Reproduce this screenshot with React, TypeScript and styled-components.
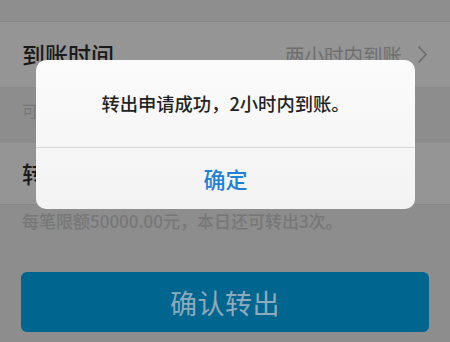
import React from 'react';
import styled, { createGlobalStyle } from 'styled-components';

const GlobalStyle = createGlobalStyle`
  html, body {
    margin: 0;
    padding: 0;
  }
  body {
    font-family: "Noto Sans CJK SC", "Noto Sans", sans-serif;
    background: #8d8d8d;
  }
`;

const Page = styled.div`
  position: relative;
  width: 450px;
  height: 342px;
  overflow: hidden;
  background: #8d8d8d;
  display: flex;
  flex-direction: column;
`;

const TopBand = styled.div`
  height: 21px;
  border-bottom: 1px solid #868686;
  background: #8e8e8e;
`;

const Row = styled.div<{ $height: number }>`
  height: ${p => p.$height}px;
  box-sizing: border-box;
  padding: 0 22px;
  display: flex;
  align-items: center;
  justify-content: space-between;
  background: #959595;
  border-bottom: 1px solid #888;
`;

const Label = styled.span`
  font-size: 23px;
  font-weight: 500;
  color: #1a1a1a;
  line-height: 1;
`;

const Value = styled.span`
  display: flex;
  align-items: center;
  gap: 15px;
  font-size: 19.5px;
  color: #6f6f6f;
`;

const Note = styled.div`
  height: 55px;
  box-sizing: border-box;
  padding: 10px 22px 0;
  font-size: 16px;
  color: #777;
`;

const Hint = styled.div`
  padding: 5px 22px 0;
  font-size: 17px;
  font-weight: 500;
  color: #777;
  line-height: 22px;
`;

const SubmitButton = styled.button`
  margin: 40px 21px 0;
  height: 60px;
  border: none;
  border-radius: 6px;
  background: #00658f;
  color: #8eaabb;
  font-family: inherit;
  font-size: 27px;
  letter-spacing: 0.5px;
`;

const Dialog = styled.div`
  position: absolute;
  top: 60px;
  left: 36px;
  width: 379px;
  height: 149px;
  border-radius: 10px;
  background: linear-gradient(#fbfbfb, #f3f3f3);
  display: flex;
  flex-direction: column;
  overflow: hidden;
`;

const Message = styled.div`
  height: 88px;
  display: flex;
  align-items: center;
  justify-content: center;
  padding-bottom: 2px;
  box-sizing: border-box;
  font-size: 18.3px;
  font-weight: 500;
  color: #222;
  border-bottom: 1px solid #d6d6d6;
`;

const DialogButton = styled.div`
  flex: 1;
  display: flex;
  align-items: center;
  justify-content: center;
  padding-bottom: 2px;
  font-size: 22px;
  font-weight: 500;
  color: #1f80d8;
`;

const Chevron = () => (
  <svg width="11" height="19" viewBox="0 0 11 19">
    <path d="M1.5 1.5 L9 9.5 L1.5 17.5" fill="none" stroke="#6f6f6f" strokeWidth="1.8" />
  </svg>
);

const App: React.FC = () => (
  <>
    <GlobalStyle />
    <Page>
      <TopBand />
      <Row $height={66}>
        <Label>到账时间</Label>
        <Value>
          两小时内到账
          <Chevron />
        </Value>
      </Row>
      <Note>可转出金额 1000.00元</Note>
      <Row $height={62}>
        <Label>转出金额</Label>
      </Row>
      <Hint>每笔限额50000.00元，本日还可转出3次。</Hint>
      <SubmitButton>确认转出</SubmitButton>
      <Dialog>
        <Message>转出申请成功，2小时内到账。</Message>
        <DialogButton>确定</DialogButton>
      </Dialog>
    </Page>
  </>
);

export default App;
